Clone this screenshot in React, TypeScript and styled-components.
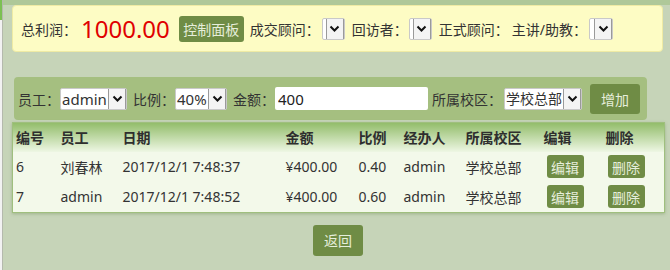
import React from "react";
import styled, { createGlobalStyle } from "styled-components";

const GlobalStyle = createGlobalStyle`
  html, body {
    margin: 0;
    padding: 0;
    background: #c6d4b8;
    font-family: "Noto Sans", "Noto Sans CJK SC", sans-serif;
    font-size: 14px;
    color: #333;
  }
`;

const Page = styled.div`
  display: flex;
  width: 670px;
  height: 270px;
  overflow: hidden;
`;

const SideStrip = styled.div`
  width: 2px;
  flex: none;
  background: linear-gradient(#7cc052 0, #7cc052 20px, #f2f2f2 20px);
  border-right: 1px solid #b4b9ad;
`;

const Main = styled.div`
  flex: 1;
  display: flex;
  flex-direction: column;
  padding: 5px 0 0 9px;
  background: linear-gradient(#afc899 0, #afc899 5px, #c6d4b8 5px);
`;

const SummaryBar = styled.div`
  display: flex;
  align-items: center;
  width: 651px;
  height: 47px;
  box-sizing: border-box;
  padding: 0 8px;
  background: #fdfcc4;
  border: 1px solid #efeba4;
  border-radius: 4px;
`;

const Label = styled.span<{ $l?: number; $r?: number }>`
  margin-left: ${(p) => p.$l ?? 0}px;
  margin-right: ${(p) => p.$r ?? 0}px;
  white-space: nowrap;
`;

const Profit = styled.span`
  color: #e00000;
  font-size: 24px;
  margin: 0 9px 0 4px;
  font-family: "Noto Sans", sans-serif;
`;

const GreenButton = styled.button<{ $w: number; $h: number }>`
  width: ${(p) => p.$w}px;
  height: ${(p) => p.$h}px;
  padding: 0;
  border: none;
  border-radius: 3px;
  background: #6f8c45;
  color: #e6eedb;
  font-family: "Noto Sans CJK SC", sans-serif;
  font-size: 14px;
  flex: none;
  cursor: pointer;
`;

const FakeSelect = styled.div<{ $w: number }>`
  display: inline-flex;
  align-items: stretch;
  width: ${(p) => p.$w}px;
  height: 22px;
  box-sizing: border-box;
  background: #fff;
  border: 1px solid #c9c9c9;
  border-radius: 2px;
  flex: none;
`;

const SelectText = styled.span<{ $fs: number }>`
  flex: 1;
  padding-left: 1px;
  line-height: 20px;
  font-size: ${(p) => p.$fs}px;
  overflow: hidden;
  white-space: nowrap;
`;

const Arrow = styled.span`
  width: 16px;
  flex: none;
  display: flex;
  align-items: center;
  justify-content: center;
  background: #f4f4f4;
  border-left: 1px solid #9a9a9a;
  border-right: 1px solid #9a9a9a;
`;

const FormPanel = styled.div`
  display: flex;
  align-items: center;
  width: 633px;
  height: 43px;
  box-sizing: border-box;
  margin: 25px 0 0 2px;
  padding: 0 0 0 4px;
  background: #a5bf80;
  border-radius: 4px;
`;

const TextInput = styled.input`
  width: 153px;
  height: 23px;
  box-sizing: border-box;
  border: none;
  border-radius: 2px;
  padding: 0 3px;
  font-family: "Noto Sans", sans-serif;
  font-size: 15px;
  color: #222;
  background: #fff;
  flex: none;
`;

const Table = styled.table`
  width: 652px;
  margin-top: 2px;
  border-collapse: collapse;
  table-layout: fixed;
  background: #f3f9ea;
  border: 1px solid #9fbf7e;
  box-shadow: 0 1px 3px rgba(90, 120, 60, 0.35);
`;

const HeadRow = styled.tr`
  height: 29px;
  background: linear-gradient(#93bd6b, #eef7e4);
`;

const Th = styled.th`
  text-align: left;
  padding: 0 0 0 3px;
  font-weight: bold;
  font-family: "Noto Sans CJK SC", sans-serif;
  color: #2e2e2e;
`;

const Td = styled.td`
  height: 30px;
  padding: 0 0 0 3px;
  white-space: nowrap;
`;

const RowButton = styled(GreenButton)<{ $ml: number }>`
  margin-left: ${(p) => p.$ml}px;
  display: block;
`;

const Footer = styled.div`
  display: flex;
  justify-content: center;
  padding: 12px 0 0;
  width: 652px;
`;

const Chevron = () => (
  <svg width="11" height="8" viewBox="0 0 11 8">
    <path d="M1.5 1.5 L5.5 5.5 L9.5 1.5" fill="none" stroke="#111" strokeWidth="2" />
  </svg>
);

const Select = ({ w, value = "", fs = 15 }: { w: number; value?: string; fs?: number }) => (
  <FakeSelect $w={w}>
    <SelectText $fs={fs}>{value}</SelectText>
    <Arrow>
      <Chevron />
    </Arrow>
  </FakeSelect>
);

const rows = [
  { id: 6, name: "刘春林", date: "2017/12/1 7:48:37", amount: "¥400.00", ratio: "0.40", agent: "admin", school: "学校总部" },
  { id: 7, name: "admin", date: "2017/12/1 7:48:52", amount: "¥400.00", ratio: "0.60", agent: "admin", school: "学校总部" },
];

const widths = [45, 62, 163, 73, 45, 62, 78, 62, 62];
const heads = ["编号", "员工", "日期", "金额", "比例", "经办人", "所属校区", "编辑", "删除"];

export default function App() {
  return (
    <Page>
      <GlobalStyle />
      <SideStrip />
      <Main>
        <SummaryBar>
          <Label>总利润：</Label>
          <Profit>1000.00</Profit>
          <GreenButton $w={65} $h={26}>控制面板</GreenButton>
          <Label $l={6} $r={2}>成交顾问：</Label>
          <Select w={23} />
          <Label $l={7} $r={1}>回访者：</Label>
          <Select w={23} />
          <Label $l={7}>正式顾问：</Label>
          <Label $l={3} $r={2}>主讲/助教：</Label>
          <Select w={24} />
        </SummaryBar>

        <FormPanel>
          <Label>员工：</Label>
          <Select w={67} value="admin" />
          <Label $l={6}>比例：</Label>
          <Select w={52} value="40%" />
          <Label $l={6}>金额：</Label>
          <TextInput defaultValue="400" />
          <Label $l={4} $r={2}>所属校区：</Label>
          <Select w={78} value="学校总部" fs={14} />
          <GreenButton $w={50} $h={30} style={{ marginLeft: 8 }}>增加</GreenButton>
        </FormPanel>

        <Table>
          <colgroup>
            {widths.map((w, i) => (
              <col key={i} style={{ width: w }} />
            ))}
          </colgroup>
          <thead>
            <HeadRow>
              {heads.map((h) => (
                <Th key={h}>{h}</Th>
              ))}
            </HeadRow>
          </thead>
          <tbody>
            {rows.map((r) => (
              <tr key={r.id}>
                <Td>{r.id}</Td>
                <Td>{r.name}</Td>
                <Td>{r.date}</Td>
                <Td>{r.amount}</Td>
                <Td>{r.ratio}</Td>
                <Td>{r.agent}</Td>
                <Td>{r.school}</Td>
                <Td>
                  <RowButton $w={37} $h={23} $ml={3}>编辑</RowButton>
                </Td>
                <Td>
                  <RowButton $w={37} $h={23} $ml={2}>删除</RowButton>
                </Td>
              </tr>
            ))}
          </tbody>
        </Table>

        <Footer>
          <GreenButton $w={50} $h={31}>返回</GreenButton>
        </Footer>
      </Main>
    </Page>
  );
}
